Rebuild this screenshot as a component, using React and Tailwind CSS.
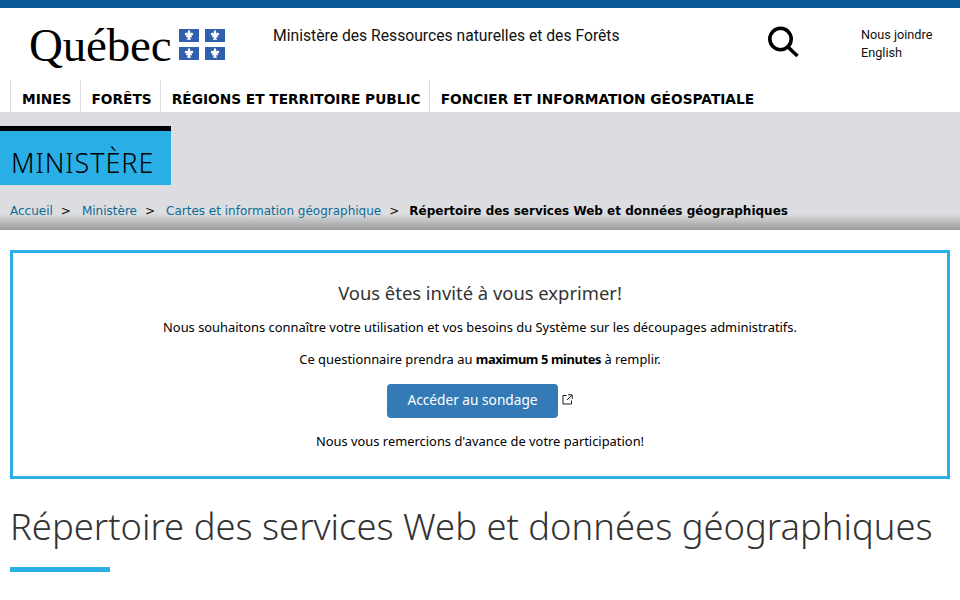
const dejavu = "font-['DejaVu_Sans',sans-serif]";

function FlagTile() {
  return (
    <svg width="20" height="13" viewBox="0 0 20 13" className="block">
      <rect width="20" height="13" fill="#3060ad" />
      <path
        d="M10 .8c1.2 1.3 1.6 2.5 1 4.2.5-1 1.7-1.6 2.6-1 1 .7.7 2.2-.5 2.5-.4.1-.8 0-1.1-.2.1.5.5.9 1 .9v1h-1.9c.1 1 .6 1.9 1.2 2.6H7.700c.6-.7 1.100-1.600 1.200-2.600H7v-1c.5 0 .9-.4 1-.9-.3.2-.7.3-1.100.2-1.200-.3-1.500-1.800-.5-2.500.9-.6 2.100 0 2.600 1-.6-1.700-.2-2.900 1-4.200z"
        fill="#ffffff"
      />
    </svg>
  );
}

function Logo() {
  return (
    <div className="flex items-start ml-[29px] mt-[12px] w-[196px] shrink-0">
      <span className="font-['Liberation_Serif',serif] text-[47px] leading-[50px] tracking-[-0.2px] text-black w-[150px] shrink-0">Québec</span>
      <div className="grid grid-cols-2 gap-x-[6px] gap-y-[5px] mt-[9px]">
        <FlagTile />
        <FlagTile />
        <FlagTile />
        <FlagTile />
      </div>
    </div>
  );
}

function SearchIcon() {
  return (
    <svg className="ml-[11px] mt-[18px] shrink-0" width="32" height="32" viewBox="0 0 32 32" fill="none" stroke="#000000" strokeWidth="3.6">
      <circle cx="12.500" cy="13" r="10.700" />
      <path d="M20 21l9.500 9" />
    </svg>
  );
}

function NavItem({ label, pr }) {
  return (
    <a className={`block border-l border-[#dcdcdc] pl-[11px] ${pr} pt-[11px] text-[13.72px] leading-[16px] font-bold text-black whitespace-nowrap ${dejavu}`}>
      {label}
    </a>
  );
}

function Crumb({ children }) {
  return <a className="text-[#0b6a94]">{children}</a>;
}

function Sep({ last }) {
  return <span className={`ml-[8px] ${last ? 'mr-[10px]' : 'mr-[11px]'} text-[#111111]`}>&gt;</span>;
}

function Banner() {
  return (
    <section className="mx-[10px] mt-[20px] h-[229px] border-[3px] border-[#29aee6] flex flex-col items-center font-['Noto_Sans',sans-serif] text-[12.9px] leading-[18px] text-black">
      <h2 className="mt-[27px] text-[18.4px] leading-[26px] font-normal text-[#333333]">Vous êtes invité à vous exprimer!</h2>
      <p className="mt-[12px]">Nous souhaitons connaître votre utilisation et vos besoins du Système sur les découpages administratifs.</p>
      <p className="mt-[14px]">Ce questionnaire prendra au <strong className="font-bold tracking-[-0.4px]">maximum 5 minutes</strong> à remplir.</p>
      <div className="mt-[16px] flex items-start">
        <a className="block w-[171px] h-[34px] rounded-[4px] bg-[#337ab7] text-center text-[13.7px] leading-[32px] text-white">Accéder au sondage</a>
        <svg className="ml-[4px] mt-[10px]" width="11" height="11" viewBox="0 0 11 11" fill="none" stroke="#222222" strokeWidth="1">
          <path d="M4.500 1.500h-3.500v8.500h8.500v-3.500" />
          <path d="M6 .8h4.200v4.200M10 1L5 6" />
        </svg>
      </div>
      <p className="mt-[14px]">Nous vous remercions d'avance de votre participation!</p>
    </section>
  );
}

export default function App() {
  return (
    <div className="w-[960px] h-[600px] overflow-hidden bg-white">
      <div className="h-2 bg-[#095797]" />
      <header className="h-[72px] flex items-start">
        <Logo />
        <div className="ml-[48px] mt-[18px] w-[484px] shrink-0 font-['Roboto',sans-serif] text-[15.7px] leading-[20px] text-[#111111]">
          Ministère des Ressources naturelles et des Forêts
        </div>
        <SearchIcon />
        <div className="ml-[61px] mt-[18px] font-['Roboto',sans-serif] text-[12.7px] leading-[18px] text-[#111111]">
          <div>Nous joindre</div>
          <div>English</div>
        </div>
      </header>
      <nav className="h-[32px] pl-[10px] flex">
        <NavItem label="MINES" pr="pr-[8px]" />
        <NavItem label="FORÊTS" pr="pr-[8px]" />
        <NavItem label="RÉGIONS ET TERRITOIRE PUBLIC" pr="pr-[8px]" />
        <NavItem label="FONCIER ET INFORMATION GÉOSPATIALE" pr="pr-[8px]" />
      </nav>
      <div className="h-[118px] bg-[#dcdde0] relative flex flex-col">
        <div className="mt-[14px] w-[171px] h-[59px] border-t-[5px] border-black bg-[#29aee6] pl-[11px] pt-[16px] font-['Noto_Sans',sans-serif] font-light tracking-[0.9px] text-[27px] leading-[32px] text-black">
          MINISTÈRE
        </div>
        <div className={`mt-[18px] pl-[10px] flex text-[12px] leading-[16px] whitespace-nowrap ${dejavu}`}>
          <Crumb>Accueil</Crumb>
          <Sep />
          <Crumb>Ministère</Crumb>
          <Sep />
          <Crumb>Cartes et information géographique</Crumb>
          <Sep last />
          <span className="font-bold text-black">Répertoire des services Web et données géographiques</span>
        </div>
        <div className="absolute left-0 right-0 bottom-0 h-[16px] bg-gradient-to-b from-transparent to-[#9a9a9a]" />
      </div>
      <Banner />
      <h1 className="mx-[10px] mt-[23px] font-['Noto_Sans',sans-serif] font-light text-[36.4px] leading-[48px] text-[#333333] whitespace-nowrap">
        Répertoire des services Web et données géographiques
      </h1>
      <div className="ml-[10px] mt-[17px] w-[100px] h-[5px] bg-[#29aee6]" />
    </div>
  );
}
